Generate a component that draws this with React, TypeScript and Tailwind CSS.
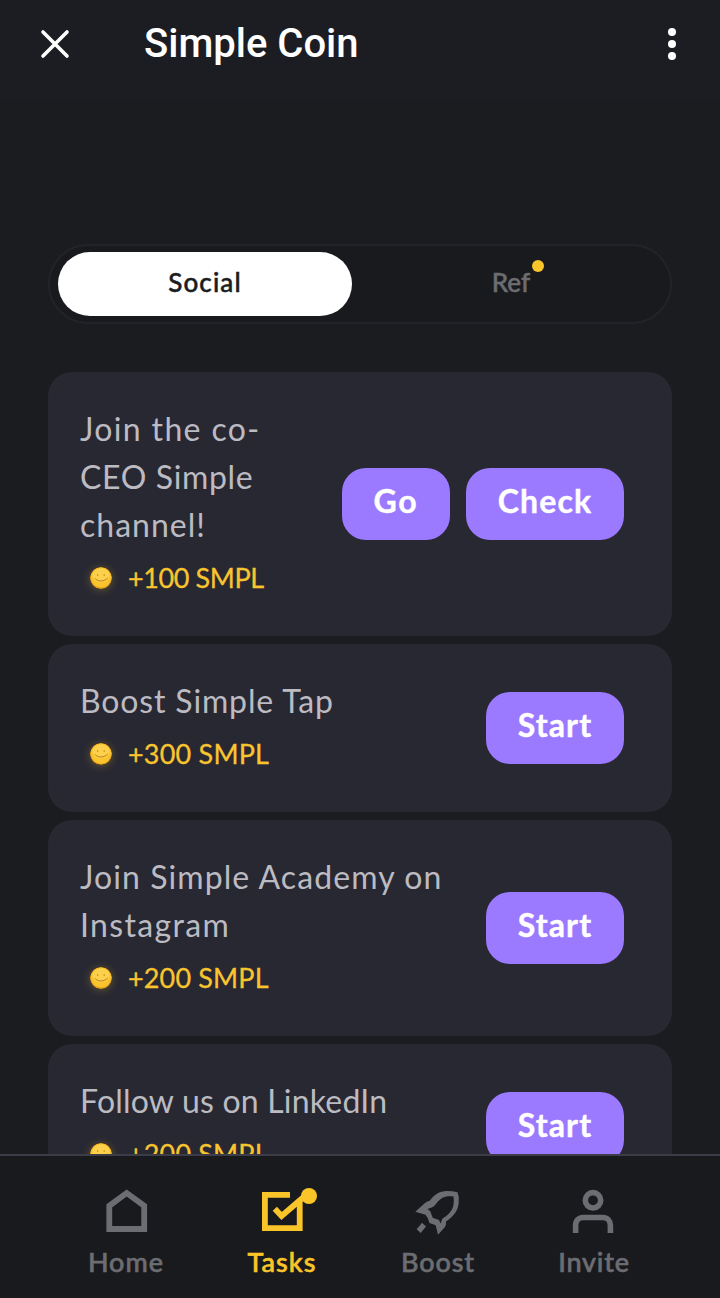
import React from 'react';

interface Line {
  text: string;
  tracking: string;
}

interface Action {
  label: string;
  width: string;
  tracking: string;
}

interface Task {
  lines: Line[];
  reward: string;
  rewardTracking: string;
  actions: Action[];
}

const START: Action = { label: 'Start', width: 'w-[138px]', tracking: 'tracking-[1.1px]' };

const TASKS: Task[] = [
  {
    lines: [
      { text: 'Join the co-', tracking: 'tracking-[1.35px]' },
      { text: 'CEO Simple', tracking: 'tracking-[0.65px]' },
      { text: 'channel!', tracking: 'tracking-[1px]' },
    ],
    reward: '+100 SMPL',
    rewardTracking: 'tracking-[-0.4px]',
    actions: [
      { label: 'Go', width: 'w-[108px]', tracking: 'tracking-[1.8px]' },
      { label: 'Check', width: 'w-[158px]', tracking: 'tracking-[1.1px]' },
    ],
  },
  {
    lines: [{ text: 'Boost Simple Tap', tracking: 'tracking-[0.85px]' }],
    reward: '+300 SMPL',
    rewardTracking: 'tracking-[0.2px]',
    actions: [START],
  },
  {
    lines: [
      { text: 'Join Simple Academy on', tracking: 'tracking-[1.08px]' },
      { text: 'Instagram', tracking: 'tracking-[1.35px]' },
    ],
    reward: '+200 SMPL',
    rewardTracking: 'tracking-[0.15px]',
    actions: [START],
  },
  {
    lines: [{ text: 'Follow us on LinkedIn', tracking: 'tracking-[0.2px]' }],
    reward: '+200 SMPL',
    rewardTracking: 'tracking-[0.15px]',
    actions: [START],
  },
];

function Coin() {
  return (
    <svg viewBox="0 0 22 22" className="w-[22px] h-[22px] rounded-full shadow-[0_1px_8px_rgba(250,196,40,0.3)]">
      <circle cx="11" cy="11" r="11" fill="#d99a16" />
      <circle cx="11" cy="10.6" r="10.2" fill="#fac42f" />
      <ellipse cx="11" cy="8.500" rx="8.500" ry="7" fill="#fdd14b" />
      <circle cx="7.600" cy="8" r="0.700" fill="#b07a16" />
      <circle cx="14.200" cy="8" r="0.700" fill="#b07a16" />
      <path d="M5 11.500c2.500 3.500 9.500 3.500 12.500-.3" fill="none" stroke="#b9811a" strokeWidth="1" strokeLinecap="round" />
    </svg>
  );
}

function TaskCard({ task }: { task: Task }) {
  return (
    <div className="flex items-center justify-between rounded-3xl bg-[#282833] py-8 pl-8 pr-12 shrink-0">
      <div>
        {task.lines.map((line) => (
          <p key={line.text} className="h-12 leading-[50px] text-[32px] text-[#bcbbc1] whitespace-nowrap">
            <span className={line.tracking}>{line.text}</span>
          </p>
        ))}
        <div className="flex h-14 items-center gap-4 pl-[10px] pb-1 pt-2">
          <Coin />
          <span className={`text-[27px] leading-8 text-[#f9c52f] whitespace-nowrap [-webkit-text-stroke:0.3px] ${task.rewardTracking}`}>
            {task.reward}
          </span>
        </div>
      </div>
      <div className="flex gap-4">
        {task.actions.map((action) => (
          <button
            key={action.label}
            className={`h-[72px] rounded-3xl bg-[#9b7aff] pb-1.5 text-[32px] font-bold text-white [-webkit-text-stroke:0.4px] ${action.width}`}
          >
            <span className={action.tracking}>{action.label}</span>
          </button>
        ))}
      </div>
    </div>
  );
}

function HomeIcon() {
  return (
    <svg width="56" height="48" viewBox="0 0 56 48" fill="none" stroke="currentColor" strokeWidth="5.800">
      <path d="M11.300 43V19.800L28.700 7l17.500 12.800V43z" />
    </svg>
  );
}

function TasksIcon() {
  return (
    <svg width="56" height="48" viewBox="0 0 56 48" className="overflow-visible" fill="none" stroke="currentColor" strokeWidth="5.800">
      <path d="M36 8.900H10.900v33.200h34.800V16" />
      <path d="M20.800 22.800l6.800 7.200L52 9" />
      <circle cx="55" cy="10" r="8" fill="currentColor" stroke="none" />
    </svg>
  );
}

function BoostIcon() {
  return (
    <svg width="56" height="48" viewBox="0 0 56 48" className="overflow-visible" fill="currentColor" fillRule="evenodd">
      <path d="M5.300 25.700L15.300 16.700Q17 15.300 19.700 14.800C24 9 29 5 37 5Q42.500 5 47.500 6.300Q49.500 11 48.700 17C48 25 43 31 36 35.500Q36.500 39 34.700 41.300L28 48.700L25.700 39.300L19.500 37Q18.300 31.500 15.500 28.700ZM17.500 23L20.300 25.300L22.700 31.700L29 34L30.500 37.500L32.500 32.500C38 29.500 42 25 43.300 20Q44.300 15 43.500 10.500C35 9.500 31 11.500 26.500 17.300Q24.500 20.300 22.300 21.200Z" />
      <path d="M12 36.700l4 3.700-5.300 6.600-4-3.700z" />
    </svg>
  );
}

function InviteIcon() {
  return (
    <svg width="56" height="48" viewBox="0 0 56 48" fill="none" stroke="currentColor" strokeWidth="5.600">
      <circle cx="27" cy="14.300" r="7.700" />
      <path d="M9.600 47v-7.500c0-4.800 3-8 7.700-8h19.400c4.700 0 7.700 3.200 7.700 8V47" />
    </svg>
  );
}

const NAV = [
  { label: 'Home', icon: HomeIcon, color: 'text-[#6c6d72]', tracking: 'tracking-[1px]' },
  { label: 'Tasks', icon: TasksIcon, color: 'text-[#fac528]', tracking: 'tracking-[1px]' },
  { label: 'Boost', icon: BoostIcon, color: 'text-[#6c6d72]', tracking: 'tracking-[0.9px]' },
  { label: 'Invite', icon: InviteIcon, color: 'text-[#6c6d72]', tracking: 'tracking-[0.8px]' },
];

export default function App() {
  return (
    <div className="flex h-[1298px] w-[720px] flex-col overflow-hidden bg-[#1b1c20] font-['Lato',sans-serif]">
      <header className="flex h-[101px] shrink-0 items-start border-b border-[#191a1d] bg-[#1c1d22] pl-10 pr-11">
        <svg width="30" height="30" viewBox="0 0 30 30" className="mt-[29px]" fill="none" stroke="#fff" strokeWidth="3.600" strokeLinecap="round">
          <path d="M3 3l24 24M27 3L3 27" />
        </svg>
        <h1 className="ml-[74px] mt-5 flex-1 text-[40px] leading-[48px] font-medium text-white font-['Roboto',sans-serif]">
          Simple Coin
        </h1>
        <svg width="8" height="34" viewBox="0 0 8 34" className="mt-[27px]" fill="#fff">
          <circle cx="4" cy="5" r="4" />
          <circle cx="4" cy="17" r="4" />
          <circle cx="4" cy="29" r="4" />
        </svg>
      </header>

      <main className="flex min-h-0 flex-1 flex-col overflow-hidden px-12 pt-[143px]">
        <div className="grid h-20 shrink-0 grid-cols-2 gap-4 rounded-full border-2 border-[#232429] bg-[#191a1d] px-2 py-1.5 text-[26px]">
          <button className="rounded-full bg-white pb-1 font-medium text-[#1b1c20] [-webkit-text-stroke:0.5px]">
            <span className="tracking-[1.1px]">Social</span>
          </button>
          <button className="pb-1 pr-2 font-medium text-[#6c6d72] [-webkit-text-stroke:0.5px]">
            <span className="relative inline-block">
              Ref
              <span className="absolute -right-3.5 -top-[3px] h-3 w-3 rounded-full bg-[#fac528]" />
            </span>
          </button>
        </div>

        <div className="mt-12 flex flex-col gap-2">
          {TASKS.map((task, i) => (
            <TaskCard key={i} task={task} />
          ))}
        </div>
      </main>

      <nav className="flex h-[144px] shrink-0 justify-between border-t-2 border-[#3c3d48] bg-[#191a1d] px-12 pt-[30px]">
        {NAV.map(({ label, icon: Icon, color, tracking }) => (
          <div key={label} className={`flex w-[156px] flex-col items-center ${color}`}>
            <Icon />
            <span className={`mt-3 text-[27px] leading-8 font-medium [-webkit-text-stroke:0.6px] ${tracking}`}>{label}</span>
          </div>
        ))}
      </nav>
    </div>
  );
}
